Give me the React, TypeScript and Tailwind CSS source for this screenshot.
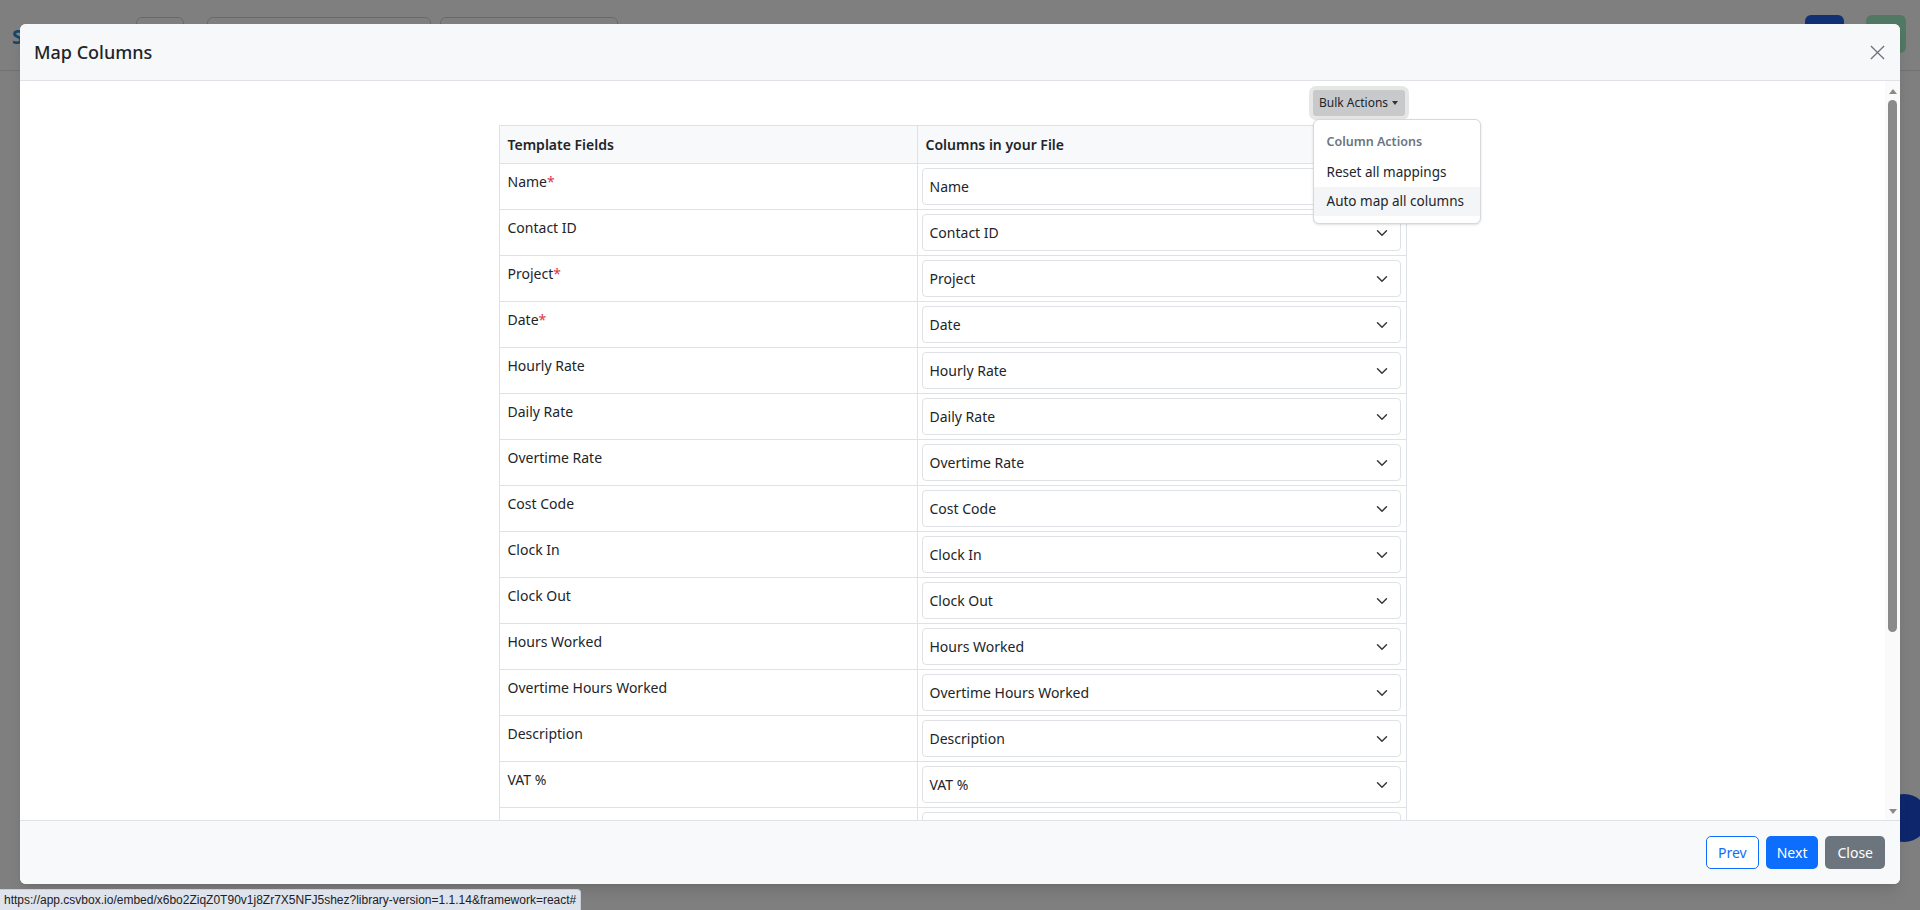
import React from 'react';

const rows: { label: string; required?: boolean }[] = [
  { label: 'Name', required: true },
  { label: 'Contact ID' },
  { label: 'Project', required: true },
  { label: 'Date', required: true },
  { label: 'Hourly Rate' },
  { label: 'Daily Rate' },
  { label: 'Overtime Rate' },
  { label: 'Cost Code' },
  { label: 'Clock In' },
  { label: 'Clock Out' },
  { label: 'Hours Worked' },
  { label: 'Overtime Hours Worked' },
  { label: 'Description' },
  { label: 'VAT %' },
  { label: 'Tax Code' },
  { label: 'Notes' },
];

const Chevron = () => (
  <svg width="16" height="12" viewBox="0 0 16 16" fill="none">
    <path d="m2 5 6 6 6-6" stroke="#343a40" strokeWidth="2" strokeLinecap="round" strokeLinejoin="round" />
  </svg>
);

const App: React.FC = () => {
  return (
    <div className="relative h-[910px] w-[1920px] overflow-hidden bg-white font-['Noto_Sans',sans-serif] text-[#212529]">
      {/* page behind the dialog */}
      <div className="flex h-[71px] items-start border-b border-[#dee2e6]">
        <span className="ml-[12px] mt-[22px] text-[20px] font-bold text-[#2a8fd8]">S</span>
        <div className="ml-[113px] mt-[17px] flex h-[38px] w-[48px] items-center justify-center rounded-md border border-[#ced4da]">
          <div className="h-[20px] w-[21px] rounded-sm bg-[#222]" />
        </div>
        <div className="ml-[23px] mt-[17px] h-[38px] w-[224px] rounded-md border border-[#ced4da]" />
        <div className="ml-[9px] mt-[17px] h-[38px] w-[178px] rounded-md border border-[#ced4da]" />
        <div className="ml-auto mt-[15px] h-[38px] w-[39px] rounded-md bg-[#2563eb]" />
        <div className="ml-[22px] mt-[15px] mr-[14px] h-[38px] w-[40px] rounded-md bg-[#a2f0c4]" />
      </div>
      <div className="absolute bottom-[68px] right-[-8px] h-[48px] w-[48px] rounded-full bg-[#1d4ed8]" />

      {/* backdrop */}
      <div className="absolute inset-0 bg-black/50" />

      {/* dialog */}
      <div className="absolute inset-0 px-[20px] pt-[24px]">
        <div className="flex h-[860px] flex-col overflow-hidden rounded-md bg-white shadow-lg">
          <div className="flex h-[57px] shrink-0 items-center justify-between border-b border-[#dee2e6] bg-[#f7f8fa] pl-[14px] pr-[15px]">
            <h5 className="text-[18px] font-medium leading-none">Map Columns</h5>
            <svg width="15" height="15" viewBox="0 0 16 16" fill="none">
              <path d="M1 1l14 14M15 1L1 15" stroke="#6c757d" strokeWidth="1.4" />
            </svg>
          </div>

          <div className="relative flex min-h-0 flex-1">
            <div className="min-w-0 flex-1 overflow-hidden">
              <div className="mx-auto w-[908px] pt-[9px]">
                <div className="flex justify-end">
                  <div className="relative mr-[2px]">
                    <button className="flex h-[26px] w-[92px] items-center justify-center gap-[4px] rounded-[3px] bg-[#c8c9ca] text-[12px] text-[#212529] ring-4 ring-[#e6e6e7]">
                      Bulk Actions
                      <span className="h-0 w-0 border-x-[3.5px] border-t-[4px] border-x-transparent border-t-[#333]" />
                    </button>
                    <div className="absolute left-0 top-full z-10 mt-[3px] w-[168px] rounded-md border border-[#d6d8db] bg-white py-[7px] text-[13.5px] shadow-sm">
                      <div className="whitespace-nowrap px-[13px] py-[6px] text-[12.5px] font-semibold text-[#6c757d]">Column Actions</div>
                      <div className="flex h-[29px] items-center whitespace-nowrap px-[13px]">Reset all mappings</div>
                      <div className="flex h-[29px] items-center whitespace-nowrap bg-[#f4f5f7] px-[13px]">Auto map all columns</div>
                    </div>
                  </div>
                </div>

                <div className="mt-[9px] border-x border-t border-[#dee2e6] text-[14px]">
                  <div className="grid h-[38px] grid-cols-[418px_1fr] border-b border-[#dee2e6] bg-[#f8f9fa] font-semibold">
                    <div className="flex items-center border-r border-[#dee2e6] px-2">Template Fields</div>
                    <div className="flex items-center px-2">Columns in your File</div>
                  </div>
                  {rows.map((r) => (
                    <div key={r.label} className="grid h-[46px] grid-cols-[418px_1fr] border-b border-[#dee2e6]">
                      <div className="border-r border-[#dee2e6] px-2 pt-[7px]">
                        {r.label}
                        {r.required && <span className="text-[#dc3545]">*</span>}
                      </div>
                      <div className="py-1 pl-1 pr-[5px]">
                        <div className="flex h-[37px] items-center justify-between rounded-[4px] border border-[#dee2e6] bg-white pl-[7px] pr-[10px]">
                          <span>{r.label}</span>
                          <Chevron />
                        </div>
                      </div>
                    </div>
                  ))}
                </div>
              </div>
            </div>

            {/* scrollbar */}
            <div className="flex w-[15px] shrink-0 flex-col items-center bg-[#fafafa] pt-[8px]">
              <span className="h-0 w-0 border-x-[4px] border-b-[5px] border-x-transparent border-b-[#8a8a8a]" />
              <div className="mt-[6px] h-[532px] w-[9px] rounded-full bg-[#8a8a8a]" />
              <span className="mt-auto mb-[6px] h-0 w-0 border-x-[4px] border-t-[5px] border-x-transparent border-t-[#8a8a8a]" />
            </div>
          </div>

          <div className="flex h-[64px] shrink-0 items-center justify-end gap-[7px] border-t border-[#dee2e6] bg-[#f8f9fa] pr-[15px]">
            <button className="h-[33px] rounded-[5px] border border-[#0d6efd] bg-white px-[11px] text-[14px] text-[#0d6efd]">Prev</button>
            <button className="h-[33px] rounded-[5px] bg-[#0d6efd] px-[11px] text-[14px] text-white">Next</button>
            <button className="h-[33px] rounded-[5px] bg-[#6c757d] px-[12px] text-[14px] text-white">Close</button>
          </div>
        </div>
      </div>

      {/* link status bubble */}
      <div className="absolute bottom-0 left-0 flex h-[21px] items-center rounded-tr-[4px] border-r border-t border-[#c8cdd6] bg-[#dfe3eb] px-[4px] font-['Liberation_Sans',sans-serif] text-[12px] text-[#202124]">
        https://app.csvbox.io/embed/x6bo2ZiqZ0T90v1j8Zr7X5NFJ5shez?library-version=1.1.14&amp;framework=react#
      </div>
    </div>
  );
};

export default App;
